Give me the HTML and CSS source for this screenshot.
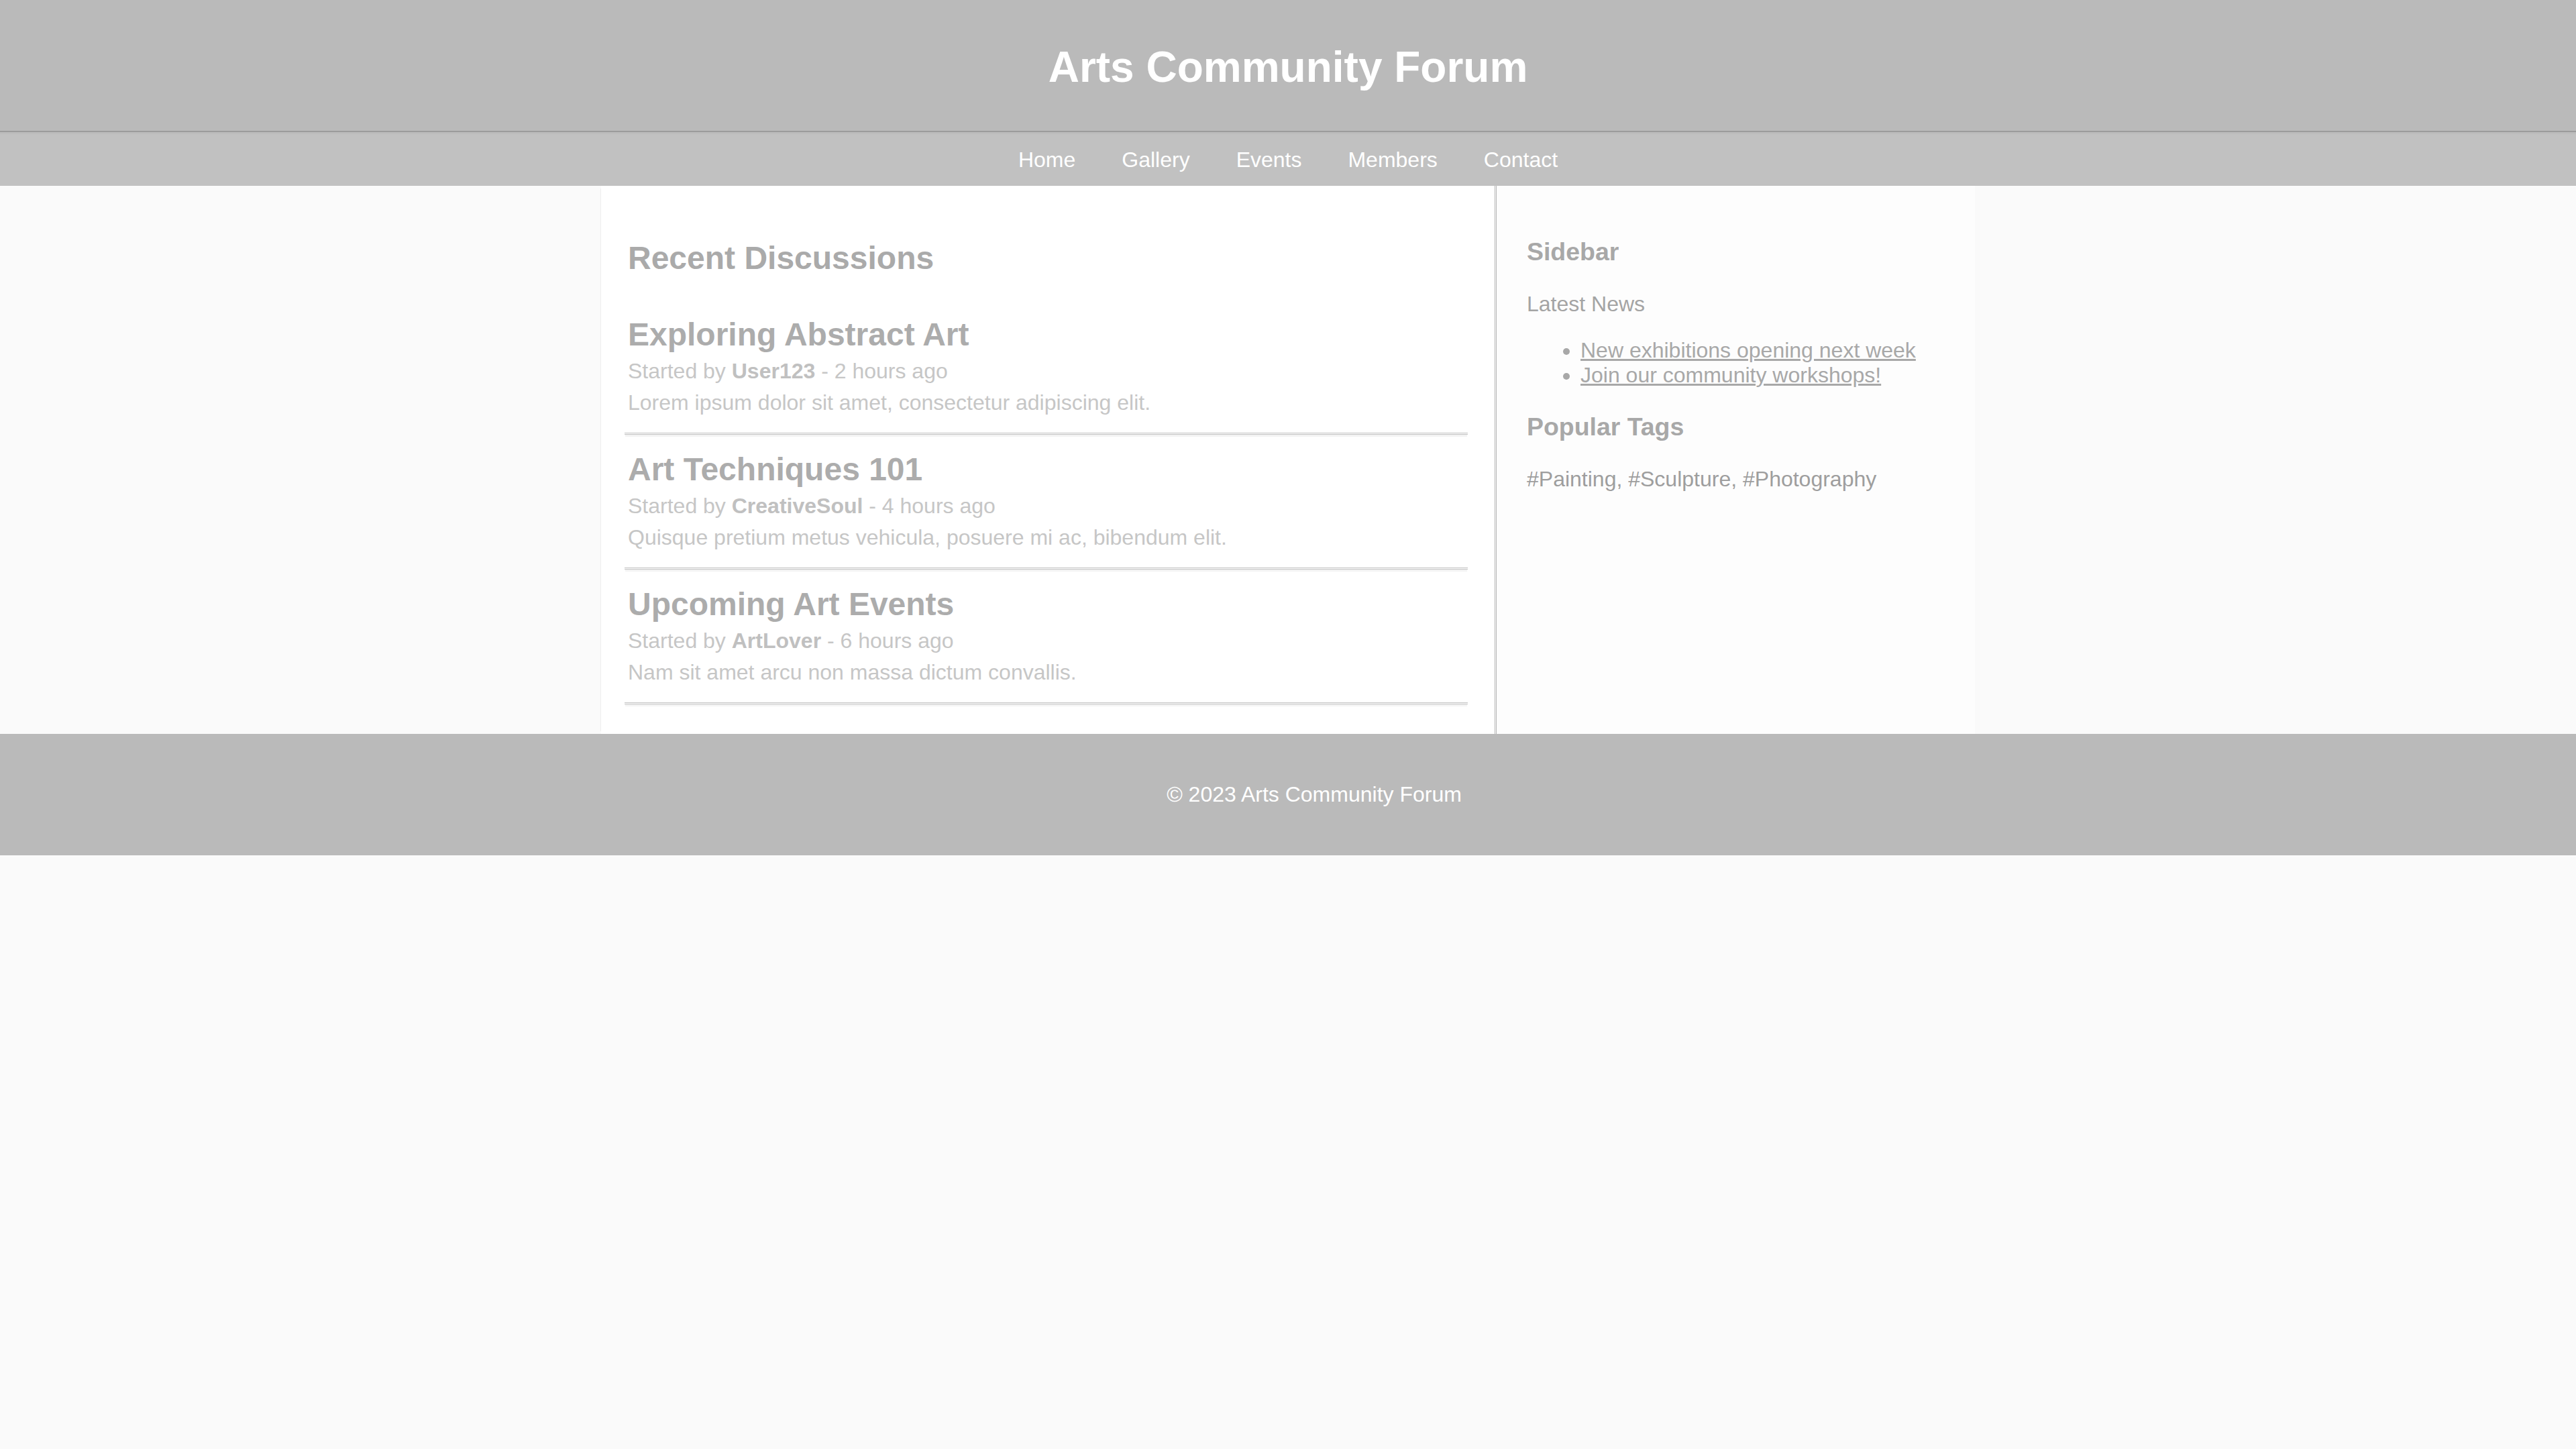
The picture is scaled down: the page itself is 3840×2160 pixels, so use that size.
FILE: index.html
```html
<!DOCTYPE html>
<html lang="en">
<head>
<meta charset="utf-8">
<title>Arts Community Forum</title>
<link rel="stylesheet" href="styles.css">
</head>
<body>
<header class="site-header">
  <h1 class="site-title">Arts Community Forum</h1>
</header>
<nav class="site-nav">
  <a href="#">Home</a>
  <a href="#">Gallery</a>
  <a href="#">Events</a>
  <a href="#">Members</a>
  <a href="#">Contact</a>
</nav>
<div class="container">
  <main class="main">
    <h2 class="section-title">Recent Discussions</h2>
    <article class="post">
      <h2 class="post-title">Exploring Abstract Art</h2>
      <p class="meta">Started by <strong>User123</strong> - 2 hours ago</p>
      <p class="desc">Lorem ipsum dolor sit amet, consectetur adipiscing elit.</p>
    </article>
    <article class="post">
      <h2 class="post-title">Art Techniques 101</h2>
      <p class="meta">Started by <strong>CreativeSoul</strong> - 4 hours ago</p>
      <p class="desc">Quisque pretium metus vehicula, posuere mi ac, bibendum elit.</p>
    </article>
    <article class="post">
      <h2 class="post-title">Upcoming Art Events</h2>
      <p class="meta">Started by <strong>ArtLover</strong> - 6 hours ago</p>
      <p class="desc">Nam sit amet arcu non massa dictum convallis.</p>
    </article>
  </main>
  <aside class="sidebar">
    <h3 class="side-title">Sidebar</h3>
    <p class="side-text">Latest News</p>
    <ul class="news">
      <li><a href="#">New exhibitions opening next week</a></li>
      <li><a href="#">Join our community workshops!</a></li>
    </ul>
    <h3 class="side-title">Popular Tags</h3>
    <p class="side-text tags">#Painting, #Sculpture, #Photography</p>
  </aside>
</div>
<footer class="site-footer">
  <p class="copy">© 2023 Arts Community Forum</p>
</footer>
</body>
</html>
```
FILE: styles.css
```css
html, body {
  margin: 0;
  padding: 0;
}
body {
  background: #fafafa;
  font-family: "Liberation Sans", Arial, sans-serif;
  font-size: 32px;
  color: #aaaaaa;
}
.site-header {
  background: #bababa;
  padding: 20px 0 15px;
  text-align: center;
  border-bottom: 2px solid #9c9c9c;
}
.site-title {
  margin: 42.9px 0;
  font-size: 64px;
  font-weight: bold;
  color: #ffffff;
}
.site-nav {
  background: #c1c1c1;
  border-top: 3px solid #bcbcbc;
  padding: 20px 0;
  display: flex;
  justify-content: center;
  gap: 69px;
}
.site-nav a {
  color: #ffffff;
  text-decoration: none;
  font-size: 32px;
}
.container {
  width: 2048px;
  margin: 0 auto;
  display: flex;
}
.main {
  box-sizing: border-box;
  width: 1335px;
  flex: none;
  background: #ffffff;
  padding: 40px 40px 44px 40px;
  border-right: 3px double #b4b4b4;
  box-shadow: -5px 0 0 -4px #efefef;
}
.section-title {
  margin: 39.8px 0 35.6px;
  font-size: 48px;
  color: #aaaaaa;
}
.post {
  margin-left: -5px;
  padding: 24px 0 26px 5px;
  border-bottom: 3px double #c2c2c2;
  box-shadow: 0 4px 0 -1px #f3f3f3;
}
.post-title {
  margin: 0 0 9px;
  font-size: 48px;
  color: #acacac;
}
.meta {
  margin: 0 0 10px;
  color: #c6c6c6;
}
.meta strong {
  color: #c0c0c0;
}
.desc {
  margin: 0;
  color: #c6c6c6;
}
.sidebar {
  flex: 1;
  background: #fdfdfd;
  padding: 40px 40px 40px 45px;
}
.side-title {
  font-size: 37.44px;
  margin: 37.44px 0;
  color: #a8a8a8;
}
.side-text {
  margin: 32px 0;
  color: #a4a4a4;
}
.news {
  margin: 32px 0;
  padding-left: 80px;
  color: #a8a8a8;
}
.news a {
  color: #a8a8a8;
  text-decoration: underline;
}
.tags {
  color: #9e9e9e;
}
.site-footer {
  background: #bababa;
  padding: 40px 0;
  text-align: center;
}
.copy {
  margin: 32px 0;
  padding-left: 78px;
  color: #ffffff;
  font-size: 32px;
}
```
